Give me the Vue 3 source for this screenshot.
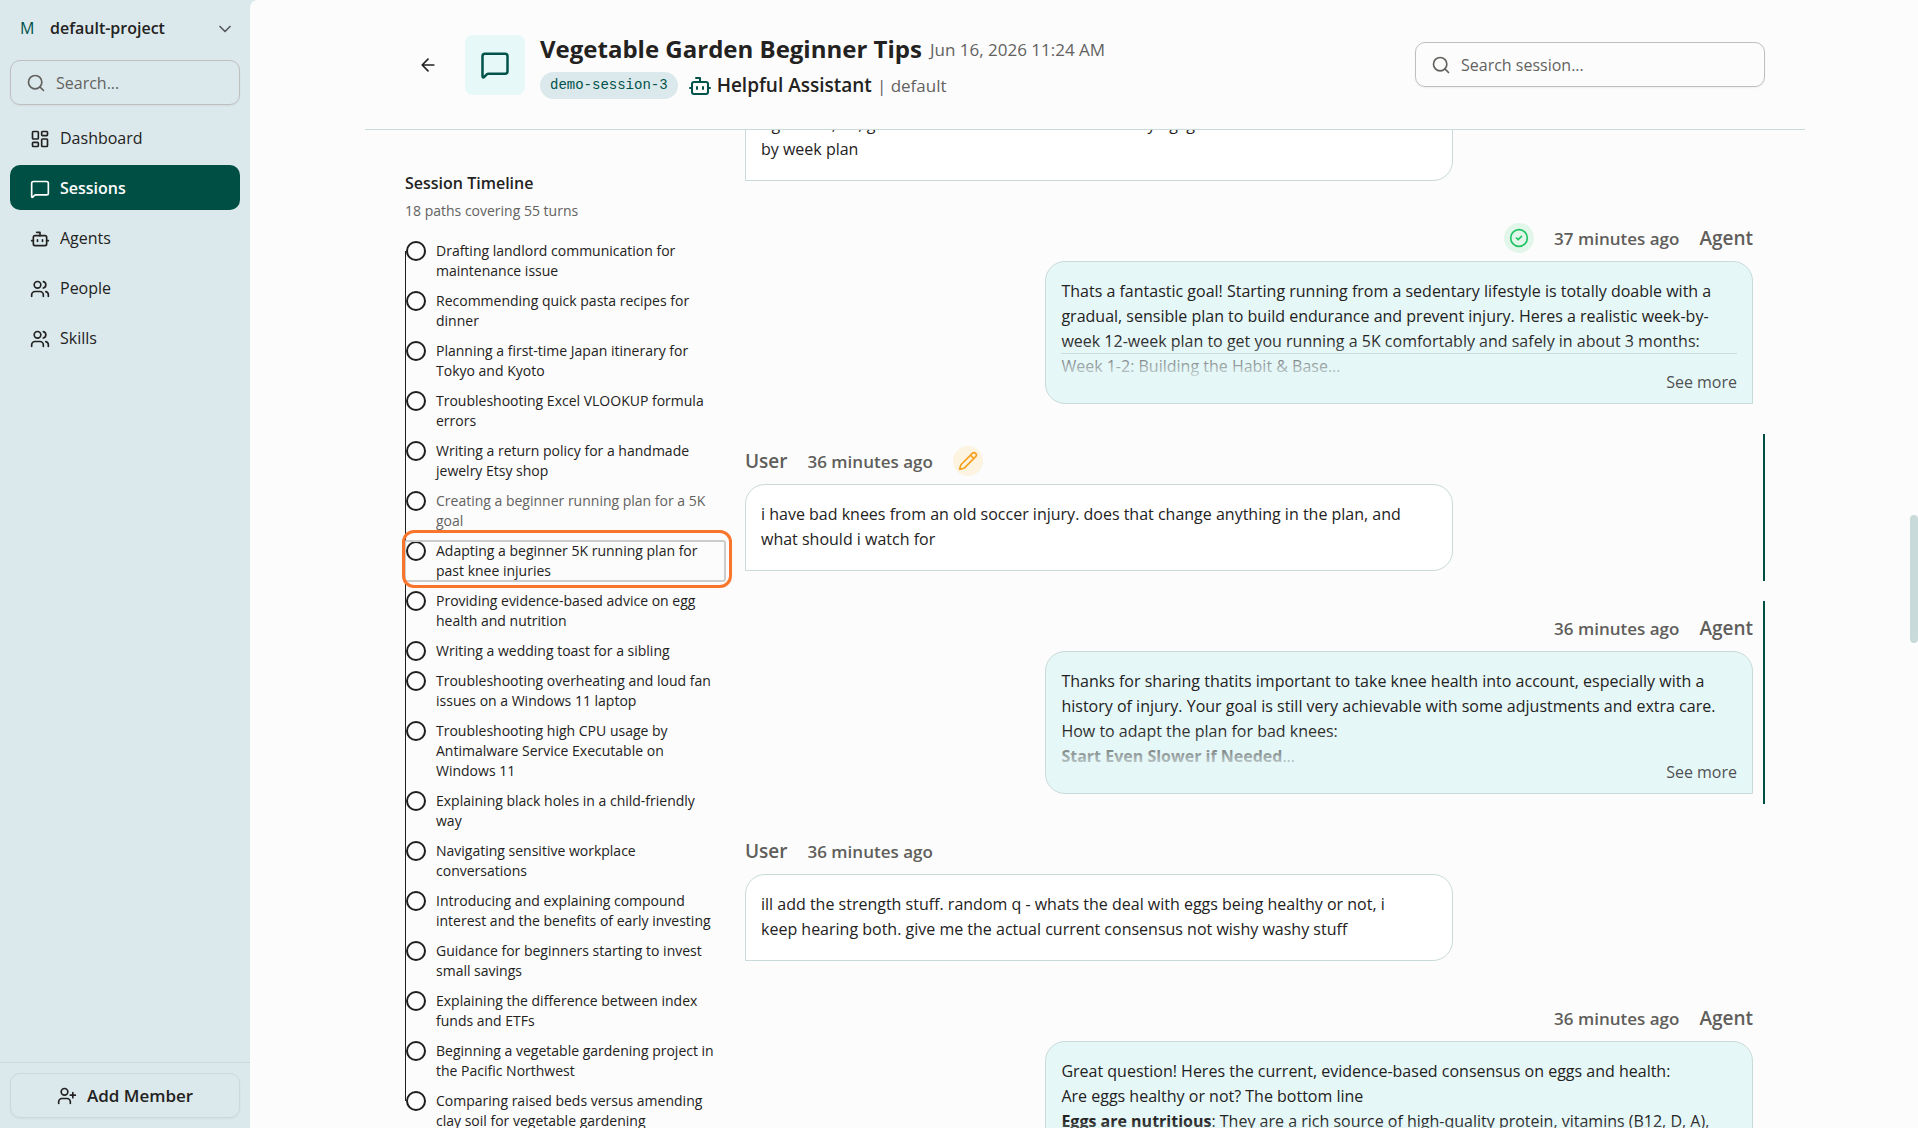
<template>
  <svg class="sprite" aria-hidden="true">
    <symbol id="i-dashboard" viewBox="0 0 24 24">
      <rect x="3" y="3" width="7" height="9" rx="1" />
      <rect x="14" y="3" width="7" height="5" rx="1" />
      <rect x="14" y="12" width="7" height="9" rx="1" />
      <rect x="3" y="16" width="7" height="5" rx="1" />
    </symbol>
    <symbol id="i-message" viewBox="0 0 24 24">
      <path d="M22 17a2 2 0 0 1-2 2H6.828a2 2 0 0 0-1.414.586l-2.202 2.202A.71.71 0 0 1 2 21.286V5a2 2 0 0 1 2-2h16a2 2 0 0 1 2 2z" />
    </symbol>
    <symbol id="i-bot" viewBox="0 0 24 24">
      <path d="M12 8V4H8M2 14h2M20 14h2M15 13v2M9 13v2" />
      <rect x="4" y="8" width="16" height="12" rx="2" />
    </symbol>
    <symbol id="i-users" viewBox="0 0 24 24">
      <path d="M16 21v-2a4 4 0 0 0-4-4H6a4 4 0 0 0-4 4v2M22 21v-2a4 4 0 0 0-3-3.87M16 3.13a4 4 0 0 1 0 7.75" />
      <circle cx="9" cy="7" r="4" />
    </symbol>
    <symbol id="i-user-plus" viewBox="0 0 24 24">
      <path d="M16 21v-2a4 4 0 0 0-4-4H6a4 4 0 0 0-4 4v2M19 8v6M22 11h-6" />
      <circle cx="9" cy="7" r="4" />
    </symbol>
    <symbol id="i-search" viewBox="0 0 24 24">
      <circle cx="11" cy="11" r="8" />
      <path d="m21 21-4.3-4.3" />
    </symbol>
    <symbol id="i-chevron" viewBox="0 0 24 24">
      <path d="m6 9 6 6 6-6" />
    </symbol>
    <symbol id="i-back" viewBox="0 0 24 24">
      <path d="m12 19-7-7 7-7M19 12H5" />
    </symbol>
    <symbol id="i-check" viewBox="0 0 24 24">
      <circle cx="12" cy="12" r="10" />
      <path d="m9 12 2 2 4-4" />
    </symbol>
    <symbol id="i-pencil" viewBox="0 0 24 24">
      <path d="M21.174 6.812a1 1 0 0 0-3.986-3.987L3.842 16.174a2 2 0 0 0-.5.83l-1.321 4.352a.5.5 0 0 0 .623.622l4.353-1.32a2 2 0 0 0 .83-.497zM15 5l4 4" />
    </symbol>
  </svg>

  <div class="layout">
    <aside class="sidebar">
      <button class="project" type="button">
        <span class="project-letter">M</span>
        <span class="project-name">default-project</span>
        <svg class="icon"><use href="#i-chevron" /></svg>
      </button>

      <label class="search-box">
        <svg class="icon"><use href="#i-search" /></svg>
        <input v-model="navQuery" type="text" placeholder="Search..." aria-label="Search" />
      </label>

      <nav class="nav">
        <a
          v-for="item in navItems"
          :key="item.label"
          href="#"
          class="nav-link"
          :class="{ active: item.label === 'Sessions' }"
        >
          <svg class="icon"><use :href="`#i-${item.icon}`" /></svg>
          {{ item.label }}
        </a>
      </nav>

      <div class="sidebar-footer">
        <button class="add-member" type="button">
          <svg class="icon"><use href="#i-user-plus" /></svg>
          Add Member
        </button>
      </div>
    </aside>

    <main class="main">
      <header class="header">
        <button class="back" type="button" aria-label="Back">
          <svg class="icon"><use href="#i-back" /></svg>
        </button>
        <div class="session-icon">
          <svg class="icon"><use href="#i-message" /></svg>
        </div>
        <div class="session-info">
          <div class="title-row">
            <h1>Vegetable Garden Beginner Tips</h1>
            <span class="muted">Jun 16, 2026 11:24 AM</span>
          </div>
          <div class="agent-row">
            <span class="session-id">demo-session-3</span>
            <svg class="icon bot"><use href="#i-bot" /></svg>
            <span class="agent-name">Helpful Assistant</span>
            <span class="muted">| default</span>
          </div>
        </div>
        <label class="search-box session-search">
          <svg class="icon"><use href="#i-search" /></svg>
          <input v-model="sessionQuery" type="text" placeholder="Search session..." aria-label="Search session" />
        </label>
      </header>

      <div class="content">
        <section class="timeline">
          <h2>Session Timeline</h2>
          <p class="timeline-meta">18 paths covering 55 turns</p>
          <ol class="timeline-list">
            <li v-for="(path, i) in paths" :key="path">
              <button
                type="button"
                class="path"
                :class="{ visited: i === 5, selected: i === selected }"
                @click="selected = i"
              >
                <span class="dot"></span>
                <span>{{ path }}</span>
              </button>
            </li>
          </ol>
        </section>

        <section ref="feed" class="feed">
          <article
            v-for="(msg, i) in messages"
            :key="i"
            class="message"
            :class="[msg.role.toLowerCase(), { highlighted: msg.highlighted }]"
          >
            <div v-if="msg.time" class="message-head">
              <span class="role">{{ msg.role }}</span>
              <span class="time">{{ msg.time }}</span>
              <span v-if="msg.badge" class="badge" :class="msg.badge">
                <svg class="icon"><use :href="`#i-${msg.badge}`" /></svg>
              </span>
            </div>
            <div class="bubble">
              <div :class="{ preview: msg.role === 'Agent' }">
                <p v-for="line in msg.lines" :key="line.text" :class="{ ruled: line.ruled }">
                  <strong v-if="line.bold">{{ line.bold }}</strong>{{ line.text }}
                </p>
              </div>
              <button v-if="msg.role === 'Agent'" class="see-more" type="button">See more</button>
            </div>
          </article>
        </section>
      </div>
      <div class="scroll-thumb"></div>
    </main>
  </div>
</template>

<script setup>
import { onMounted, ref } from 'vue'

const navQuery = ref('')
const sessionQuery = ref('')
const selected = ref(6)
const feed = ref(null)

const navItems = [
  { label: 'Dashboard', icon: 'dashboard' },
  { label: 'Sessions', icon: 'message' },
  { label: 'Agents', icon: 'bot' },
  { label: 'People', icon: 'users' },
  { label: 'Skills', icon: 'users' }
]

const paths = [
  'Drafting landlord communication for maintenance issue',
  'Recommending quick pasta recipes for dinner',
  'Planning a first-time Japan itinerary for Tokyo and Kyoto',
  'Troubleshooting Excel VLOOKUP formula errors',
  'Writing a return policy for a handmade jewelry Etsy shop',
  'Creating a beginner running plan for a 5K goal',
  'Adapting a beginner 5K running plan for past knee injuries',
  'Providing evidence-based advice on egg health and nutrition',
  'Writing a wedding toast for a sibling',
  'Troubleshooting overheating and loud fan issues on a Windows 11 laptop',
  'Troubleshooting high CPU usage by Antimalware Service Executable on Windows 11',
  'Explaining black holes in a child-friendly way',
  'Navigating sensitive workplace conversations',
  'Introducing and explaining compound interest and the benefits of early investing',
  'Guidance for beginners starting to invest small savings',
  'Explaining the difference between index funds and ETFs',
  'Beginning a vegetable gardening project in the Pacific Northwest',
  'Comparing raised beds versus amending clay soil for vegetable gardening'
]

const messages = [
  {
    role: 'User',
    lines: [
      { text: 'right now, 38, goal is a 5k in three months without dying. give me a realistic week' },
      { text: 'by week plan' }
    ]
  },
  {
    role: 'Agent',
    time: '37 minutes ago',
    badge: 'check',
    lines: [
      { text: 'Thats a fantastic goal! Starting running from a sedentary lifestyle is totally doable with a gradual, sensible plan to build endurance and prevent injury. Heres a realistic week-by-week 12-week plan to get you running a 5K comfortably and safely in about 3 months:' },
      { text: 'Week 1-2: Building the Habit & Base...', ruled: true }
    ]
  },
  {
    role: 'User',
    time: '36 minutes ago',
    badge: 'pencil',
    highlighted: true,
    lines: [
      { text: 'i have bad knees from an old soccer injury. does that change anything in the plan, and what should i watch for' }
    ]
  },
  {
    role: 'Agent',
    time: '36 minutes ago',
    highlighted: true,
    lines: [
      { text: 'Thanks for sharing thatits important to take knee health into account, especially with a history of injury. Your goal is still very achievable with some adjustments and extra care.' },
      { text: 'How to adapt the plan for bad knees:' },
      { bold: 'Start Even Slower if Needed', text: '...' }
    ]
  },
  {
    role: 'User',
    time: '36 minutes ago',
    lines: [
      { text: 'ill add the strength stuff. random q - whats the deal with eggs being healthy or not, i' },
      { text: 'keep hearing both. give me the actual current consensus not wishy washy stuff' }
    ]
  },
  {
    role: 'Agent',
    time: '36 minutes ago',
    lines: [
      { text: 'Great question! Heres the current, evidence-based consensus on eggs and health:' },
      { text: 'Are eggs healthy or not? The bottom line' },
      { bold: 'Eggs are nutritious', text: ': They are a rich source of high-quality protein, vitamins (B12, D, A),' }
    ]
  }
]

onMounted(() => {
  feed.value.scrollTop = 48
})
</script>

<style>
body {
  margin: 0;
  background: #dce9ec;
}
</style>

<style scoped>
.sprite {
  display: none;
}

.layout {
  display: flex;
  height: 100vh;
  overflow: hidden;
  background: #dce9ec;
  color: #232221;
  font-family: "Open Sans", "Noto Sans", sans-serif;
  font-size: 16px;
  line-height: 25px;
}

button,
input {
  font: inherit;
  color: inherit;
  background: none;
  border: none;
  padding: 0;
}

button {
  cursor: pointer;
}

h1,
h2,
p,
ol {
  margin: 0;
  padding: 0;
}

.icon {
  width: 20px;
  height: 20px;
  flex-shrink: 0;
  fill: none;
  stroke: currentColor;
  stroke-width: 2;
  stroke-linecap: round;
  stroke-linejoin: round;
}

.muted {
  color: #63625f;
  font-size: 17px;
  font-weight: 400;
}

/* sidebar */
.sidebar {
  width: 250px;
  flex-shrink: 0;
  display: flex;
  flex-direction: column;
}

.project {
  display: flex;
  align-items: center;
  height: 60px;
  padding: 0 15px 3px 20px;
  text-align: left;
}

.project-letter {
  width: 30px;
  color: #00524a;
}

.project-name {
  flex: 1;
  font-weight: 600;
}

.project .icon {
  color: #55585a;
}

.search-box {
  display: flex;
  align-items: center;
  gap: 10px;
  height: 45px;
  box-sizing: border-box;
  padding: 1px 15px 0;
  border: 1px solid #bfbfbf;
  border-radius: 10px;
  box-shadow: 0 1px 2px rgba(0, 0, 0, 0.06);
  color: #63625f;
}

.search-box input {
  flex: 1;
  min-width: 0;
  outline: none;
}

.search-box input::placeholder {
  color: #63625f;
  opacity: 1;
}

.sidebar .search-box {
  margin: 0 10px 10px;
}

.nav {
  display: flex;
  flex-direction: column;
  gap: 5px;
  padding: 0 10px;
  flex: 1;
}

.nav-link {
  display: flex;
  align-items: center;
  gap: 10px;
  height: 45px;
  box-sizing: border-box;
  padding: 2px 0 0 20px;
  border-radius: 10px;
  color: inherit;
  text-decoration: none;
}

.nav-link.active {
  background: #004f44;
  color: #fff;
  font-weight: 600;
}

.sidebar-footer {
  padding: 10px;
  border-top: 1px solid #c8dad9;
}

.add-member {
  display: flex;
  align-items: center;
  justify-content: center;
  gap: 10px;
  width: 100%;
  height: 45px;
  border: 1px solid #c8dad9;
  border-radius: 10px;
  box-shadow: 0 1px 2px rgba(0, 0, 0, 0.05);
  font-size: 17px;
  font-weight: 600;
}

/* main */
.main {
  position: relative;
  flex: 1;
  min-width: 0;
  display: flex;
  flex-direction: column;
  padding-left: 2px;
  background: #fcfcfc;
  border-radius: 8px 0 0 0;
}

.header {
  display: flex;
  align-items: center;
  gap: 15px;
  width: 100%;
  max-width: 1440px;
  height: 130px;
  flex-shrink: 0;
  box-sizing: border-box;
  margin: 0 auto;
  padding: 0 40px;
  border-bottom: 1px solid #c8dad9;
}

.back {
  display: flex;
  align-items: center;
  justify-content: center;
  width: 45px;
  height: 45px;
}

.session-icon {
  display: flex;
  align-items: center;
  justify-content: center;
  width: 60px;
  height: 60px;
  border-radius: 8px;
  background: #e6f8f8;
  color: #00524a;
}

.session-icon .icon {
  width: 30px;
  height: 30px;
}

.session-info {
  flex: 1;
  display: flex;
  flex-direction: column;
  gap: 8px;
  padding-top: 4px;
}

.title-row {
  display: flex;
  align-items: center;
  gap: 8px;
}

.title-row h1 {
  font-size: 24px;
  line-height: 30px;
  font-weight: 700;
}

.agent-row {
  display: flex;
  align-items: center;
  gap: 5px;
}

.session-id {
  padding: 1px 10px;
  border-radius: 14px;
  background: #dce9ec;
  color: #00524a;
  font-family: "Liberation Mono", monospace;
  font-size: 14px;
}

.agent-row .bot {
  width: 24px;
  height: 24px;
  margin-left: 5px;
  color: #00524a;
}

.agent-name {
  font-size: 19px;
  font-weight: 600;
}

.session-search {
  width: 350px;
}

.content {
  display: grid;
  grid-template-columns: 320px 1fr;
  gap: 20px;
  flex: 1;
  min-height: 0;
  width: 100%;
  max-width: 1440px;
  box-sizing: border-box;
  margin: 0 auto;
  padding: 0 40px;
  overflow: hidden;
}

/* timeline */
.timeline {
  padding-top: 41px;
  font-size: 14px;
  line-height: 20px;
}

.timeline h2 {
  font-size: 16px;
  line-height: 25px;
  font-weight: 600;
}

.timeline-meta {
  margin: 5px 0 20px;
  color: #63625f;
}

.timeline-list {
  position: relative;
  display: flex;
  flex-direction: column;
  gap: 10px;
  list-style: none;
}

.timeline-list::before {
  content: "";
  position: absolute;
  top: 10px;
  bottom: 30px;
  left: 0;
  width: 1px;
  background: #1f1f1f;
}

.path {
  position: relative;
  display: flex;
  gap: 10px;
  width: 100%;
  padding: 0 2px 0 1px;
  text-align: left;
}

.path.visited {
  color: #63625f;
}

.dot {
  width: 20px;
  height: 20px;
  flex-shrink: 0;
  box-sizing: border-box;
  border: 2px solid #1f1f1f;
  border-radius: 50%;
}

.path.selected {
  border-radius: 2px;
  outline: 2px solid #cccccc;
  outline-offset: -1px;
}

.path.selected::after {
  content: "";
  position: absolute;
  inset: -11px -7px -7px -3px;
  border: 3px solid #f9752c;
  border-radius: 12px;
  pointer-events: none;
}

/* messages */
.feed {
  display: flex;
  flex-direction: column;
  gap: 20px;
  min-width: 0;
  overflow-y: auto;
  scrollbar-width: none;
}

.message {
  display: flex;
  flex-direction: column;
  align-items: flex-start;
  gap: 8px;
  flex-shrink: 0;
  padding: 12px 10px 10px 0;
  border-right: 2px solid transparent;
}

.message.agent {
  align-items: flex-end;
}

.message.highlighted {
  border-right-color: #004f44;
}

.message-head {
  display: flex;
  align-items: center;
  gap: 20px;
  height: 30px;
  color: #5f5e5b;
  font-size: 17px;
  font-weight: 600;
}

.agent .message-head {
  flex-direction: row-reverse;
}

.role {
  font-size: 19px;
}

.badge {
  display: flex;
  align-items: center;
  justify-content: center;
  width: 30px;
  height: 30px;
  border-radius: 50%;
}

.badge.check {
  background: #e2f6ea;
  color: #1fc464;
}

.badge.pencil {
  background: #fcf3e1;
  color: #f5a11d;
}

.bubble {
  display: flex;
  flex-direction: column;
  width: calc(70% + 2px);
  box-sizing: border-box;
  padding: 17px 15px 18px;
  border: 1px solid #c8dad9;
  border-radius: 20px 20px 20px 0;
  background: #fff;
}

.agent .bubble {
  padding-bottom: 11px;
  border-radius: 20px 20px 0 20px;
  background: #e6f7f8;
}

.preview {
  position: relative;
  height: 100px;
  overflow: hidden;
}

.preview::after {
  content: "";
  position: absolute;
  inset: auto 0 0;
  height: 40px;
  background: linear-gradient(rgba(230, 247, 248, 0), rgba(230, 247, 248, 0.9));
}

.ruled {
  box-shadow: 0 -1px 0 #bccfce;
}

.see-more {
  position: relative;
  align-self: flex-end;
  margin-top: -7px;
  line-height: 20px;
  color: #4f5252;
}

.scroll-thumb {
  position: absolute;
  top: 515px;
  right: 0;
  width: 8px;
  height: 128px;
  border-radius: 4px;
  background: #c8dad9;
}
</style>
